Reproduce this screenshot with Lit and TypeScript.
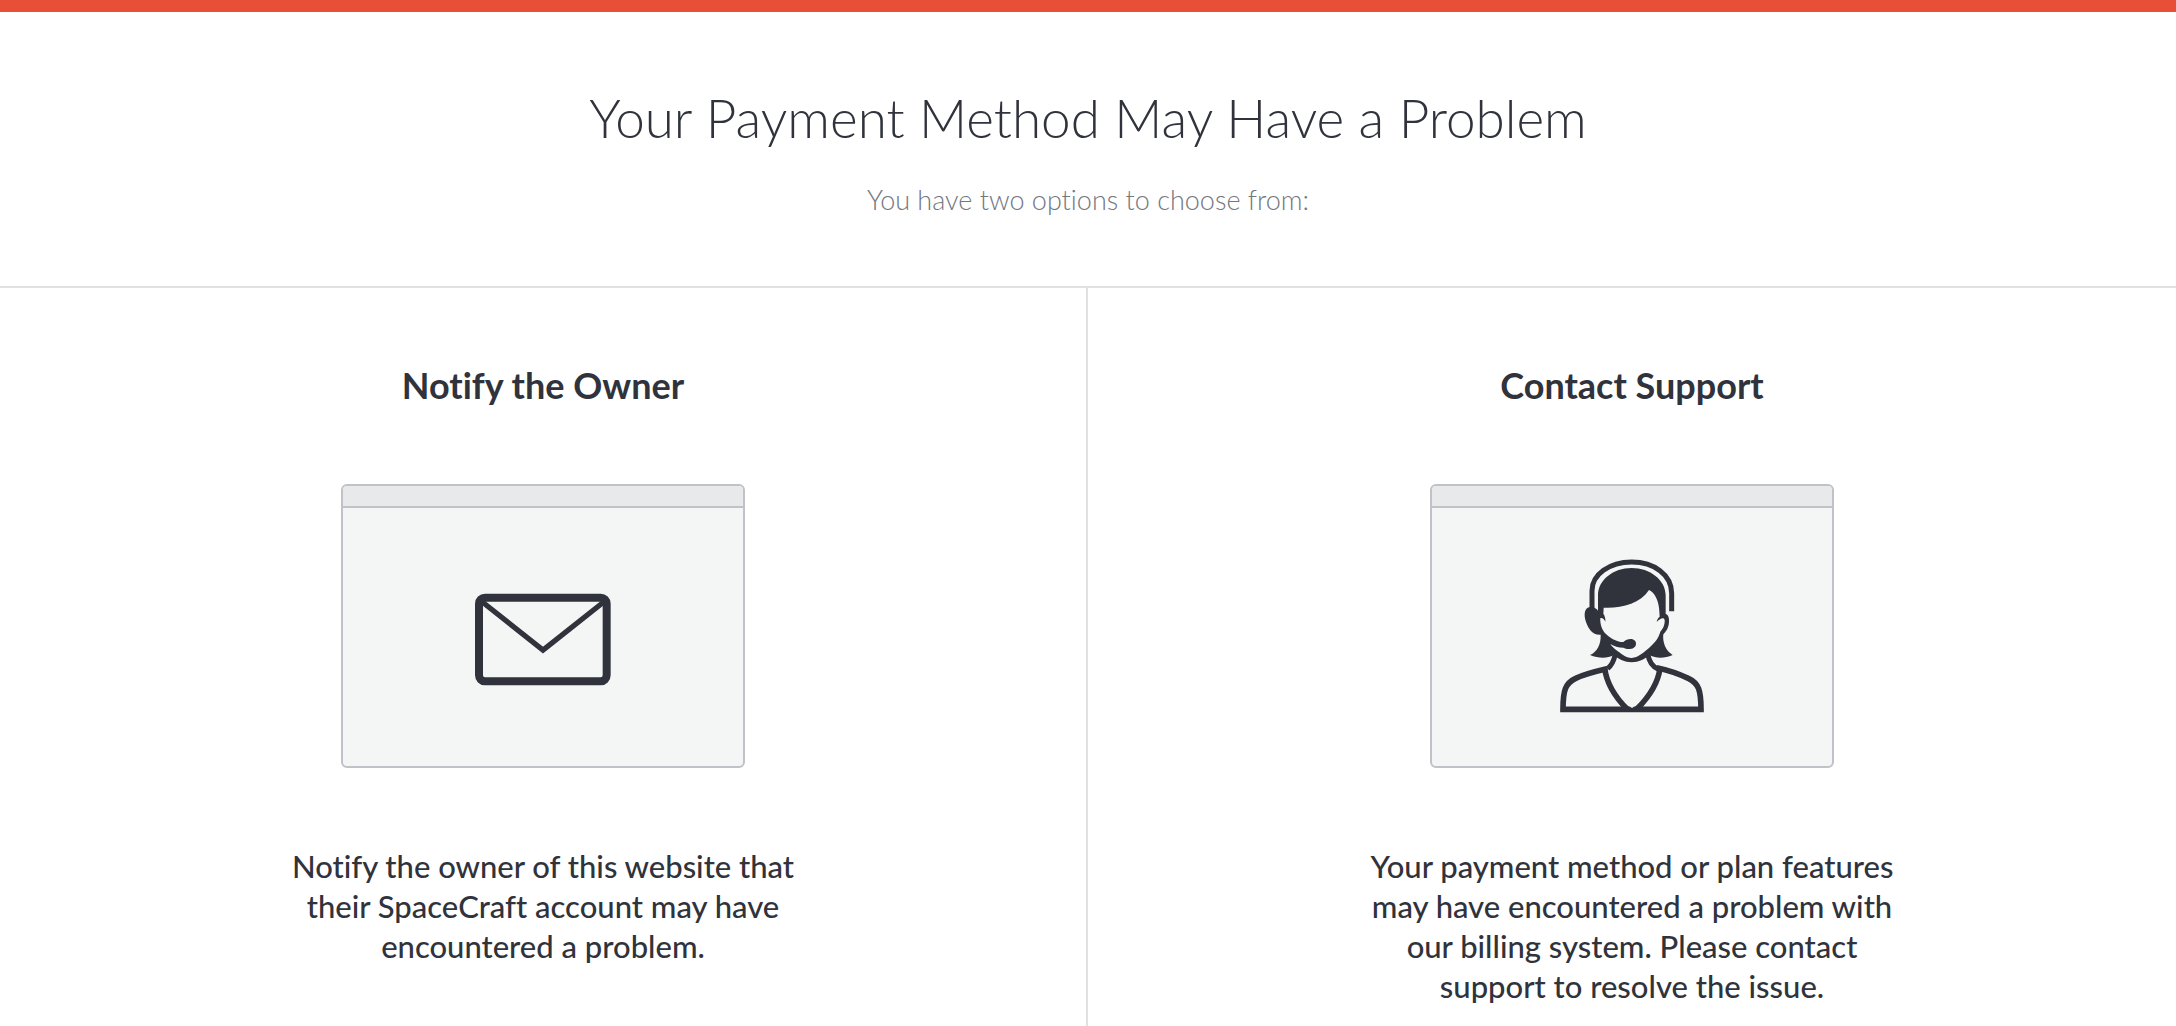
import { LitElement, html, css, svg } from "lit";
import { customElement, property } from "lit/decorators.js";

const envelope = svg`
  <rect x="444" y="383" width="383" height="251" rx="18" fill="none" stroke="currentColor" stroke-width="24" />
  <path d="M454 396 636 540 818 396" fill="none" stroke="currentColor" stroke-width="16" />
`;

const agent = svg`
  <path d="M156 210V152C156 104 208 66 275 66S395 104 395 160V214" fill="none" stroke="currentColor" stroke-width="15" />
  <path d="M174 210V166C174 120 220 84 275 84S377 120 377 166V222C385 224 388 234 387 246C386 264 378 275 370 283C367 305 376 332 398 345C374 356 349 356 329 346C312 358 297 367 275 367S238 358 221 346C201 356 174 355 150 345C172 335 183 312 182 284C158 286 146 268 138 246C130 224 134 202 150 201C163 200 172 208 174 212Z" fill="currentColor" />
  <path d="M191 203C240 206 300 192 327 150C345 158 357 184 358 214L359 230C354 233 351 239 350 246C356 240 364 234 370 235C377 237 374 253 370 262C366 270 361 273 359 281C352 306 320 330 303 343C284 357 268 357 248 344C237 336 222 328 211 312C222 319 235 323 250 323C263 331 288 328 288 311S263 293 250 306C228 306 208 292 194 278C182 263 180 244 181 234C188 233 193 238 196 245C197 235 194 226 190 221Z" fill="#f4f6f5" />
  <g fill="none" stroke="currentColor" stroke-width="15">
    <path d="M225 346C221 366 215 376 203 386" />
    <path d="M324 344C327 366 340 381 355 388" />
    <path d="M202 386C164 395 134 402 107 415C76 429 69 452 69 508H483C483 452 476 429 445 415C418 402 388 391 350 383" stroke-width="17" />
    <path d="M194 384C199 425 224 470 262 508M360 384C355 425 328 470 290 508" stroke-width="17" />
  </g>
  <path d="M255 500H297L276 516Z" fill="currentColor" />
  <path d="M266 497H286L276 504Z" fill="#f4f6f5" />
`;

@customElement("option-panel")
class OptionPanel extends LitElement {
  @property() heading = "";
  @property() text = "";
  @property() icon: "envelope" | "agent" = "envelope";

  static styles = css`
    :host {
      display: flex;
      flex-direction: column;
      align-items: center;
      padding: 72px 32px 20px;
      text-align: center;
    }
    .heading {
      margin: 0 0 74px;
      font-size: 36px;
      line-height: 50px;
      font-weight: 700;
    }
    .window {
      box-sizing: border-box;
      width: 404px;
      max-width: 100%;
      border: 2px solid #bfc2c6;
      border-radius: 6px;
      background: #f4f6f5;
      overflow: hidden;
    }
    .bar {
      height: 20px;
      border-bottom: 2px solid #bfc2c6;
      background: #e8e9eb;
    }
    .stage {
      display: flex;
      justify-content: center;
      padding: 52px 0;
    }
    .icon {
      display: block;
      height: 154px;
      overflow: visible;
    }
    .text {
      max-width: 544px;
      margin: 78px 0 0;
      font-size: 31px;
      line-height: 40px;
      font-weight: 500;
    }
  `;

  render() {
    const isAgent = this.icon === "agent";
    return html`
      <h2 class="heading">${this.heading}</h2>
      <div class="window">
        <div class="bar"></div>
        <div class="stage">
          <svg class="icon" viewBox=${isAgent ? "60 60 432 462" : "432 270 408 462"} aria-hidden="true">
            ${isAgent ? agent : envelope}
          </svg>
        </div>
      </div>
      <p class="text">${this.text}</p>
    `;
  }
}

@customElement("app-root")
class AppRoot extends LitElement {
  static styles = css`
    :host {
      display: flex;
      flex-direction: column;
      min-height: 100vh;
      box-sizing: border-box;
      border-top: 12px solid #e75037;
      background: #fff;
      color: #30333b;
      font-family: Lato, "Liberation Sans", sans-serif;
      font-variant-ligatures: none;
    }
    .intro {
      padding: 70px 32px 66px;
      border-bottom: 2px solid #e1e1e2;
      text-align: center;
    }
    .title {
      margin: 0 0 26px;
      font-size: 53px;
      line-height: 72px;
      font-weight: 300;
    }
    .subtitle {
      margin: 0;
      color: #737780;
      font-size: 27px;
      line-height: 40px;
      font-weight: 300;
    }
    .options {
      flex: 1;
      display: grid;
      grid-template-columns: 1fr 1fr;
    }
    .divided {
      border-right: 2px solid #e1e1e2;
    }
  `;

  render() {
    return html`
      <header class="intro">
        <h1 class="title">Your Payment Method May Have a Problem</h1>
        <p class="subtitle">You have two options to choose from:</p>
      </header>
      <main class="options">
        <option-panel
          class="divided"
          heading="Notify the Owner"
          icon="envelope"
          text="Notify the owner of this website that their SpaceCraft account may have encountered a problem."
        ></option-panel>
        <option-panel
          heading="Contact Support"
          icon="agent"
          text="Your payment method or plan features may have encountered a problem with our billing system. Please contact support to resolve the issue."
        ></option-panel>
      </main>
    `;
  }
}
